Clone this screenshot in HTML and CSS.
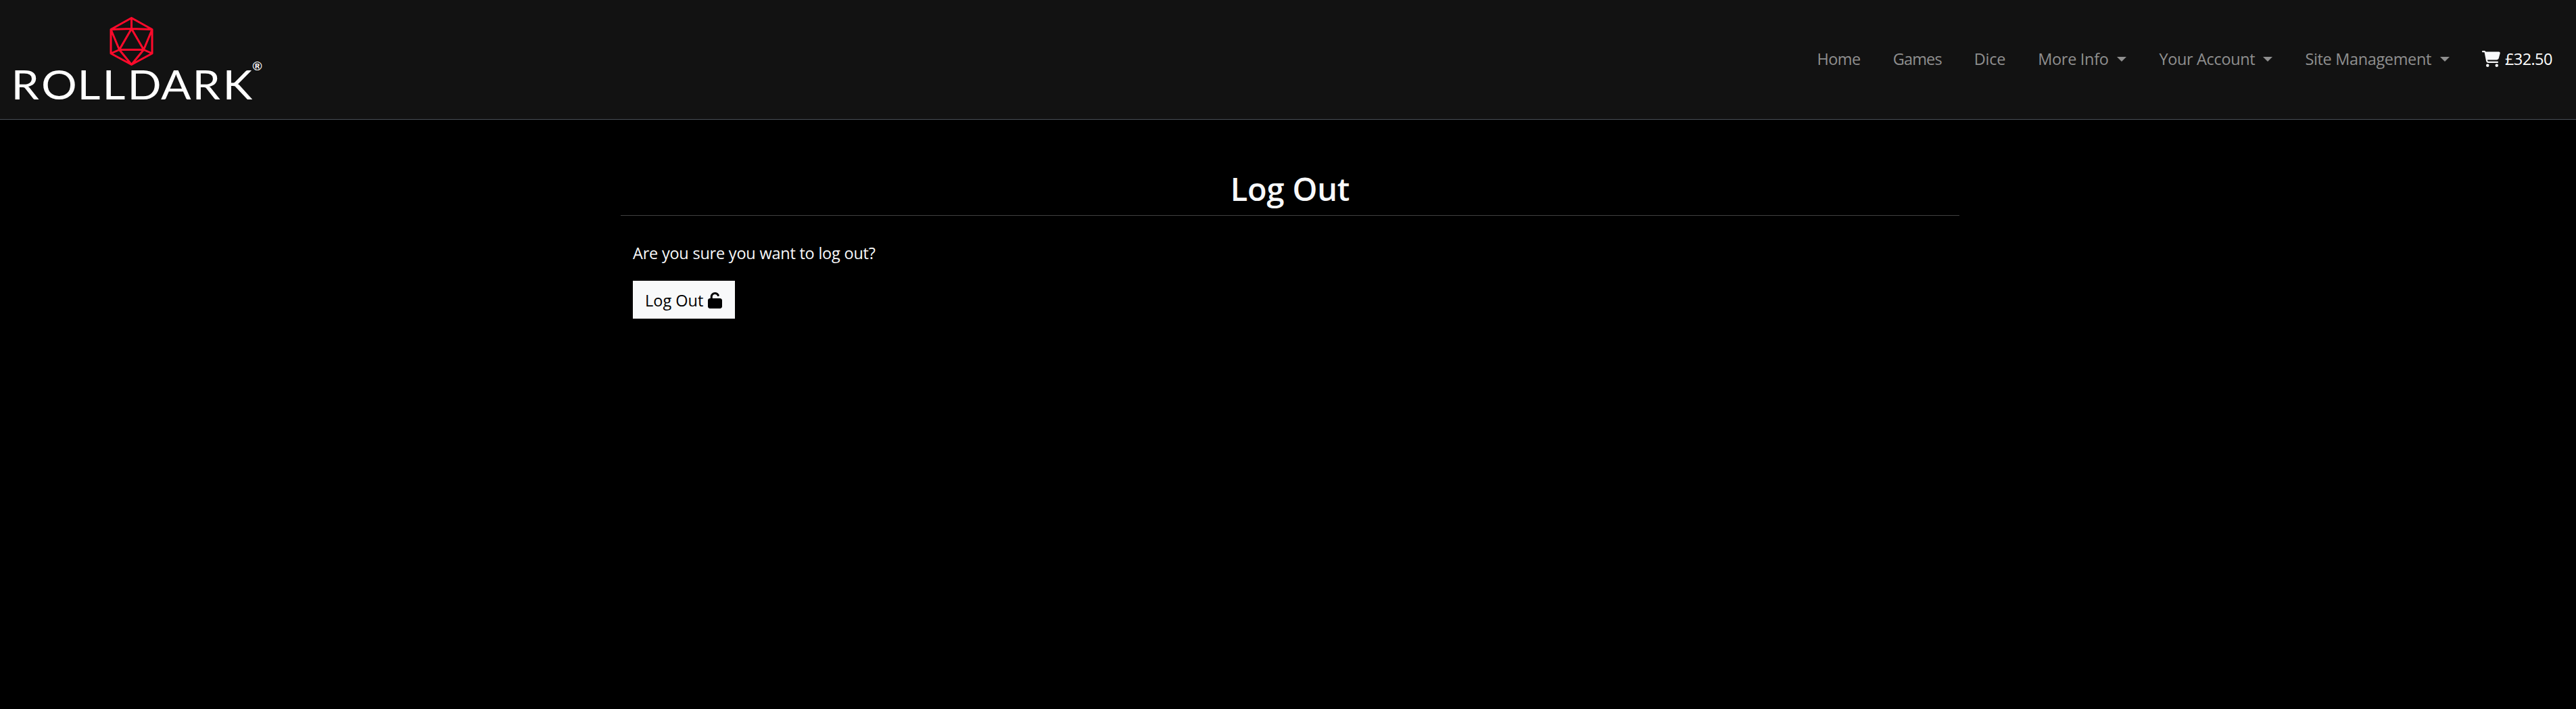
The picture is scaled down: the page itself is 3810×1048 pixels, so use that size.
FILE: index.html
```html
<!DOCTYPE html>
<html lang="en">
<head>
<meta charset="utf-8">
<title>Log Out</title>
<link rel="stylesheet" href="styles.css">
</head>
<body>
<header class="navbar">
  <a class="brand">
    <svg class="logo" viewBox="0 0 400 176" role="img" aria-label="Rolldark">
      <path class="die" d="M194.500 26.500L225 43.500V79L194.500 95.500L164 79V43.500ZM194.500 26.500V42.500M164 43.500L194.500 42.500L225 43.500M164 43.500L176.500 73.500L194.500 42.500L212.500 73.500L225 43.500M164 79L176.500 73.500H212.500L225 79M176.500 73.500L194.500 95.500L212.500 73.500"/>
      <text class="wordmark" transform="scale(1.09 1)" y="146.500" x="15.200 56 105.100 139.100 173 218.300 261.100 302.400">ROLLDARK</text>
      <text class="mark" x="373.500" y="104.300">®</text>
    </svg>
  </a>
  <nav class="links">
    <a class="link home"><span>Home</span></a>
    <a class="link games"><span>Games</span></a>
    <a class="link dice"><span>Dice</span></a>
    <a class="link info"><span>More Info</span><i class="caret"></i></a>
    <a class="link account"><span>Your Account</span><i class="caret"></i></a>
    <a class="link site"><span>Site Management</span><i class="caret"></i></a>
    <a class="link cart"><svg class="cart-icon" viewBox="0 0 576 512"><path d="M0 24C0 10.700 10.700 0 24 0H69.500c22 0 41.500 12.800 50.600 32h411c26.300 0 45.500 25 38.600 50.400l-41 152.300c-8.500 31.400-37 53.300-69.500 53.300H170.700l5.400 28.500c2.200 11.300 12.100 19.500 23.600 19.500H488c13.300 0 24 10.700 24 24s-10.700 24-24 24H199.700c-34.600 0-64.300-24.600-70.700-58.500L77.400 54.500c-.7-3.800-4-6.500-7.900-6.500H24C10.700 48 0 37.300 0 24zM128 464a48 48 0 1 1 96 0 48 48 0 1 1-96 0zm336-48a48 48 0 1 1 0 96 48 48 0 1 1 0-96z"/></svg><span>£32.50</span></a>
  </nav>
</header>
<main class="content">
  <h1 class="title">Log Out</h1>
  <div class="body">
    <p class="question">Are you sure you want to log out?</p>
    <button class="button"><span>Log Out</span><svg class="lock-icon" viewBox="0 0 448 512"><path d="M144 144c0-44.200 35.800-80 80-80 31.900 0 59.400 18.600 72.300 45.700 7.600 16 26.700 22.800 42.600 15.200s22.800-26.700 15.200-42.600C331 33.700 281.500 0 224 0 144.500 0 80 64.500 80 144v48H64c-35.300 0-64 28.700-64 64v192c0 35.300 28.700 64 64 64h320c35.300 0 64-28.700 64-64V256c0-35.300-28.700-64-64-64H144v-48z"/></svg></button>
  </div>
</main>
</body>
</html>
```
FILE: styles.css
```css
* { box-sizing: border-box; }
body {
  margin: 0;
  min-height: 100vh;
  background: #000;
  color: #f8f9fa;
  font: 23.5px/36px "Open Sans", "Noto Sans", sans-serif;
}
.navbar {
  display: flex;
  justify-content: space-between;
  height: 177px;
  padding-right: 35px;
  background: #121212;
  border-bottom: 1px solid #495057;
}
.logo { display: block; width: 400px; height: 176px; }
.die { fill: none; stroke: #ff0a2b; stroke-width: 3; stroke-linejoin: round; }
.wordmark { font: 60.5px Lato, sans-serif; fill: #fff; }
.mark { font: bold 19px "Liberation Sans", sans-serif; fill: #fff; }
.links {
  display: flex;
  align-items: center;
  gap: 48px;
  padding-bottom: 2px;
  color: #8f8f8f;
}
.link { display: flex; align-items: center; white-space: nowrap; }
.home span { width: 64.3px; letter-spacing: -0.55px; }
.games span { width: 72.1px; letter-spacing: -0.85px; }
.dice span { width: 46.3px; letter-spacing: -0.3px; }
.info span { width: 104.6px; letter-spacing: -0.3px; }
.account span { width: 141.3px; letter-spacing: -0.35px; }
.site span { width: 186.9px; letter-spacing: -0.35px; }
.cart span { width: 70px; letter-spacing: -0.6px; }
.caret {
  margin-left: 12.7px;
  border: 7.2px solid transparent;
  border-top-color: currentColor;
  border-bottom: 0;
}
.cart { color: #fff; gap: 7px; }
.cart-icon { flex: none; width: 27px; height: 24px; fill: #f8f9fa; }
.content { width: 1980px; margin: 72px 0 0 918px; }
.title {
  margin: 0;
  height: 70px;
  border-bottom: 1px solid #404040;
  font-size: 47px;
  font-weight: 600;
  line-height: 60px;
  letter-spacing: -0.2px;
  text-align: center;
}
.body { padding: 37px 18px; }
.question { margin: 0 0 23px; letter-spacing: -0.22px; }
.button {
  display: flex;
  align-items: center;
  gap: 7px;
  width: 151px;
  height: 56px;
  padding: 2px 18px 0;
  border: 0;
  background: #f8f9fa;
  color: #000;
  font: inherit;
  white-space: nowrap;
}
.button span { width: 86px; }
.lock-icon { flex: none; width: 21px; height: 24px; }
```
